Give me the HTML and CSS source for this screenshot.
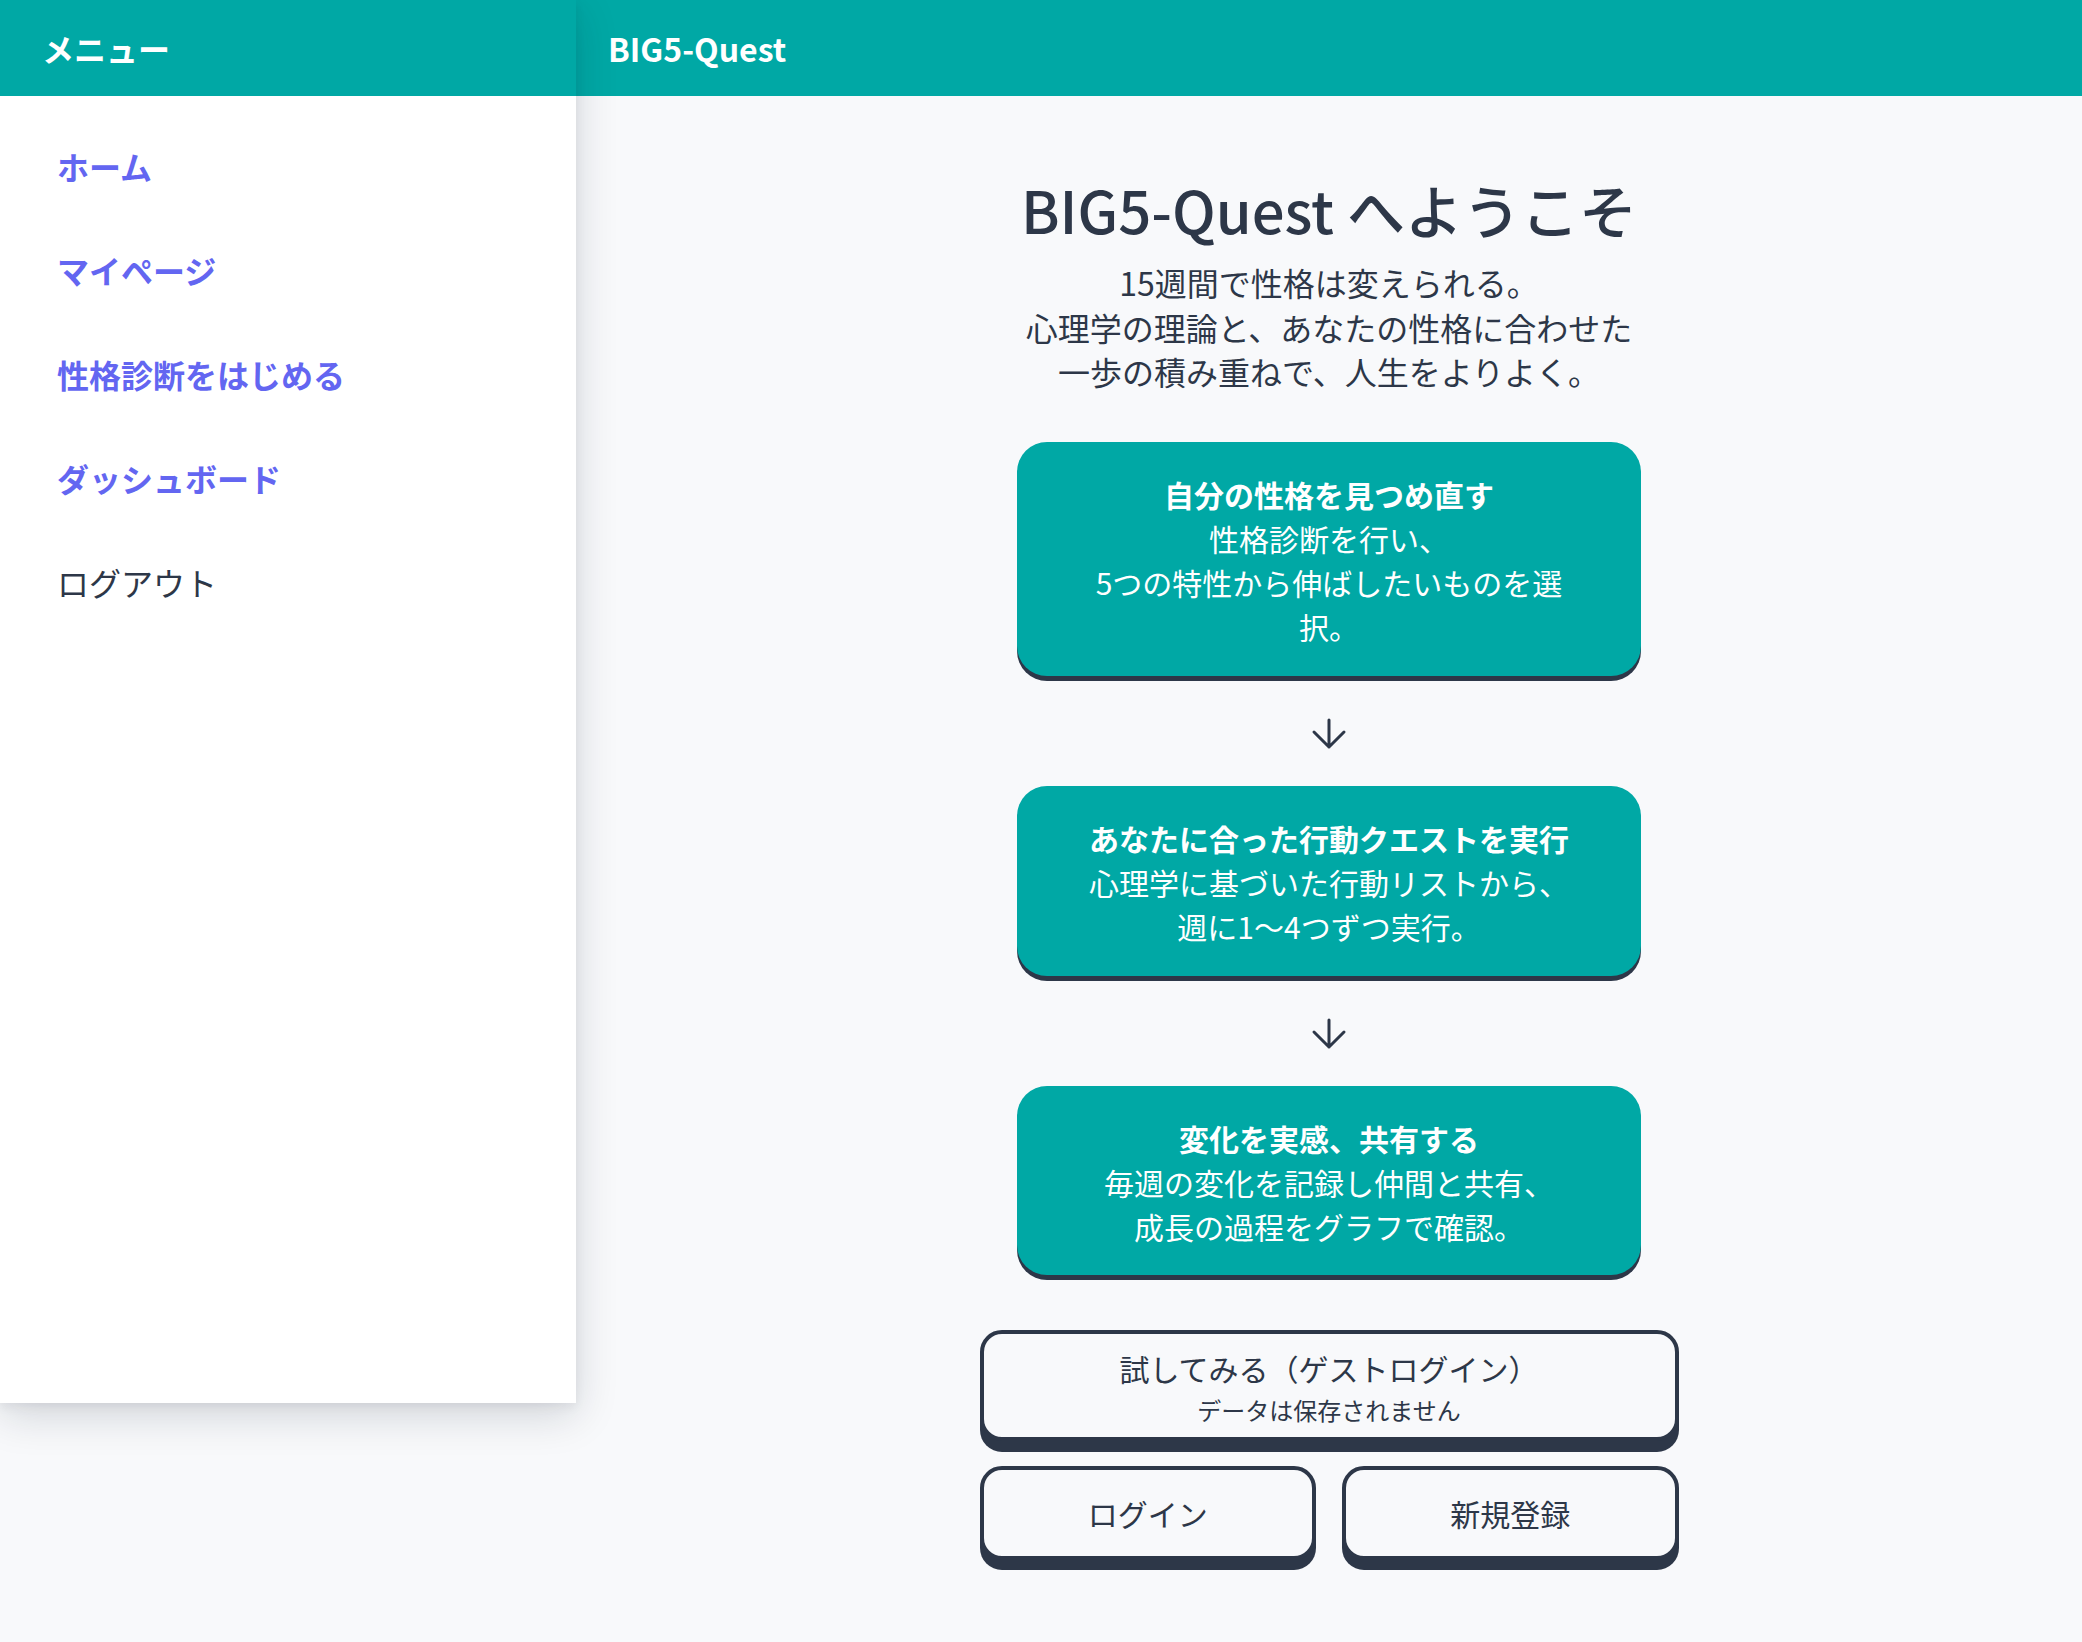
FILE: index.html
```html
<!DOCTYPE html>
<html lang="ja">
<head>
<meta charset="utf-8">
<title>BIG5-Quest</title>
<link rel="stylesheet" href="styles.css">
</head>
<body>
<div class="app">
  <aside class="drawer">
    <div class="drawer-head">メニュー</div>
    <nav class="drawer-nav">
      <a class="nav-link" href="#">ホーム</a>
      <a class="nav-link" href="#">マイページ</a>
      <a class="nav-link" href="#">性格診断をはじめる</a>
      <a class="nav-link" href="#">ダッシュボード</a>
      <a class="nav-link nav-logout" href="#">ログアウト</a>
    </nav>
  </aside>
  <div class="main">
    <header class="topbar">BIG5-Quest</header>
    <main class="content">
      <h1 class="title">BIG5-Quest へようこそ</h1>
      <p class="lead">15週間で性格は変えられる。<br>心理学の理論と、あなたの性格に合わせた<br>一歩の積み重ねで、人生をよりよく。</p>
      <div class="flow">
        <div class="card">
          <div class="card-title">自分の性格を見つめ直す</div>
          <div class="card-text">性格診断を行い、<br>5つの特性から伸ばしたいものを選択。</div>
        </div>
        <div class="arrow">
          <svg width="36" height="32" viewBox="0 0 36 32" fill="none" stroke="#2d3748" stroke-width="3" stroke-linecap="round" stroke-linejoin="round"><path d="M18 2V29M3 14L18 29L33 14"/></svg>
        </div>
        <div class="card">
          <div class="card-title">あなたに合った行動クエストを実行</div>
          <div class="card-text">心理学に基づいた行動リストから、<br>週に1〜4つずつ実行。</div>
        </div>
        <div class="arrow">
          <svg width="36" height="32" viewBox="0 0 36 32" fill="none" stroke="#2d3748" stroke-width="3" stroke-linecap="round" stroke-linejoin="round"><path d="M18 2V29M3 14L18 29L33 14"/></svg>
        </div>
        <div class="card">
          <div class="card-title">変化を実感、共有する</div>
          <div class="card-text">毎週の変化を記録し仲間と共有、<br>成長の過程をグラフで確認。</div>
        </div>
      </div>
      <div class="actions">
        <button class="btn btn-guest" type="button">
          <span class="btn-main">試してみる（ゲストログイン）</span>
          <span class="btn-sub">データは保存されません</span>
        </button>
        <button class="btn btn-small" type="button">ログイン</button>
        <button class="btn btn-small" type="button">新規登録</button>
      </div>
    </main>
  </div>
</div>
</body>
</html>
```
FILE: styles.css
```css
* { box-sizing: border-box; }
html, body {
  margin: 0;
  padding: 0;
}
body {
  background: #f8f9fb;
  font-family: "Noto Sans CJK JP", "Noto Sans", sans-serif;
  color: #2d3748;
  min-height: 1642px;
}
.app {
  display: flex;
  align-items: flex-start;
}
.drawer {
  width: 576px;
  flex: 0 0 576px;
  height: 1403px;
  background: #ffffff;
  position: relative;
  z-index: 2;
  box-shadow: 0 12px 40px rgba(15, 23, 42, 0.16), 0 4px 10px rgba(15, 23, 42, 0.06);
  display: flex;
  flex-direction: column;
}
.drawer-head {
  height: 96px;
  background: #00a8a5;
  color: #ffffff;
  font-size: 32px;
  font-weight: 700;
  display: flex;
  align-items: center;
  padding-left: 42px;
}
.drawer-nav {
  display: flex;
  flex-direction: column;
  padding: 18px 0;
}
.nav-link {
  display: block;
  padding: 30px 57px;
  line-height: 44px;
  font-size: 32px;
  font-weight: 700;
  color: #6366f1;
  text-decoration: none;
}
.nav-logout {
  color: #2d3748;
  font-weight: 400;
}
.main {
  flex: 1;
  min-width: 0;
  display: flex;
  flex-direction: column;
}
.topbar {
  height: 96px;
  background: #00a8a5;
  color: #ffffff;
  font-size: 32px;
  font-weight: 700;
  display: flex;
  align-items: center;
  padding-left: 32px;
}
.content {
  display: flex;
  flex-direction: column;
  align-items: center;
  padding: 75px 0 60px;
}
.title {
  margin: 0;
  font-size: 58px;
  line-height: 76px;
  font-weight: 500;
  color: #2d3748;
}
.lead {
  margin: 13px 0 0;
  font-size: 32px;
  line-height: 44.5px;
  text-align: center;
  color: #2d3748;
}
.flow {
  margin-top: 48px;
  width: 624px;
  display: flex;
  flex-direction: column;
}
.card {
  background: #00a8a5;
  color: #ffffff;
  border-radius: 30px;
  box-shadow: 0 5px 0 #2d3748;
  padding: 30px 64px 27px;
  text-align: center;
  font-size: 30px;
  line-height: 44.3px;
}
.card-title {
  font-weight: 700;
}
.arrow {
  height: 110px;
  display: flex;
  justify-content: center;
  padding-top: 42px;
}
.actions {
  margin-top: 55px;
  width: 699px;
  display: grid;
  grid-template-columns: 1fr 1fr;
  gap: 25px 26px;
}
.btn {
  font-family: inherit;
  color: #2d3748;
  background: #f8f9fb;
  border: 4px solid #2d3748;
  border-radius: 22px;
  box-shadow: 0 11px 0 #2d3748;
  cursor: pointer;
  display: flex;
  flex-direction: column;
  align-items: center;
  justify-content: center;
}
.btn-guest {
  grid-column: 1 / 3;
  padding: 14px 16px 10px;
}
.btn-main {
  font-size: 30px;
  line-height: 40px;
}
.btn-sub {
  margin-top: 5px;
  font-size: 24px;
  line-height: 34px;
}
.btn-small {
  font-size: 30px;
  line-height: 44px;
  padding: 21px 16px;
  box-shadow: 0 10px 0 #2d3748;
}
```
